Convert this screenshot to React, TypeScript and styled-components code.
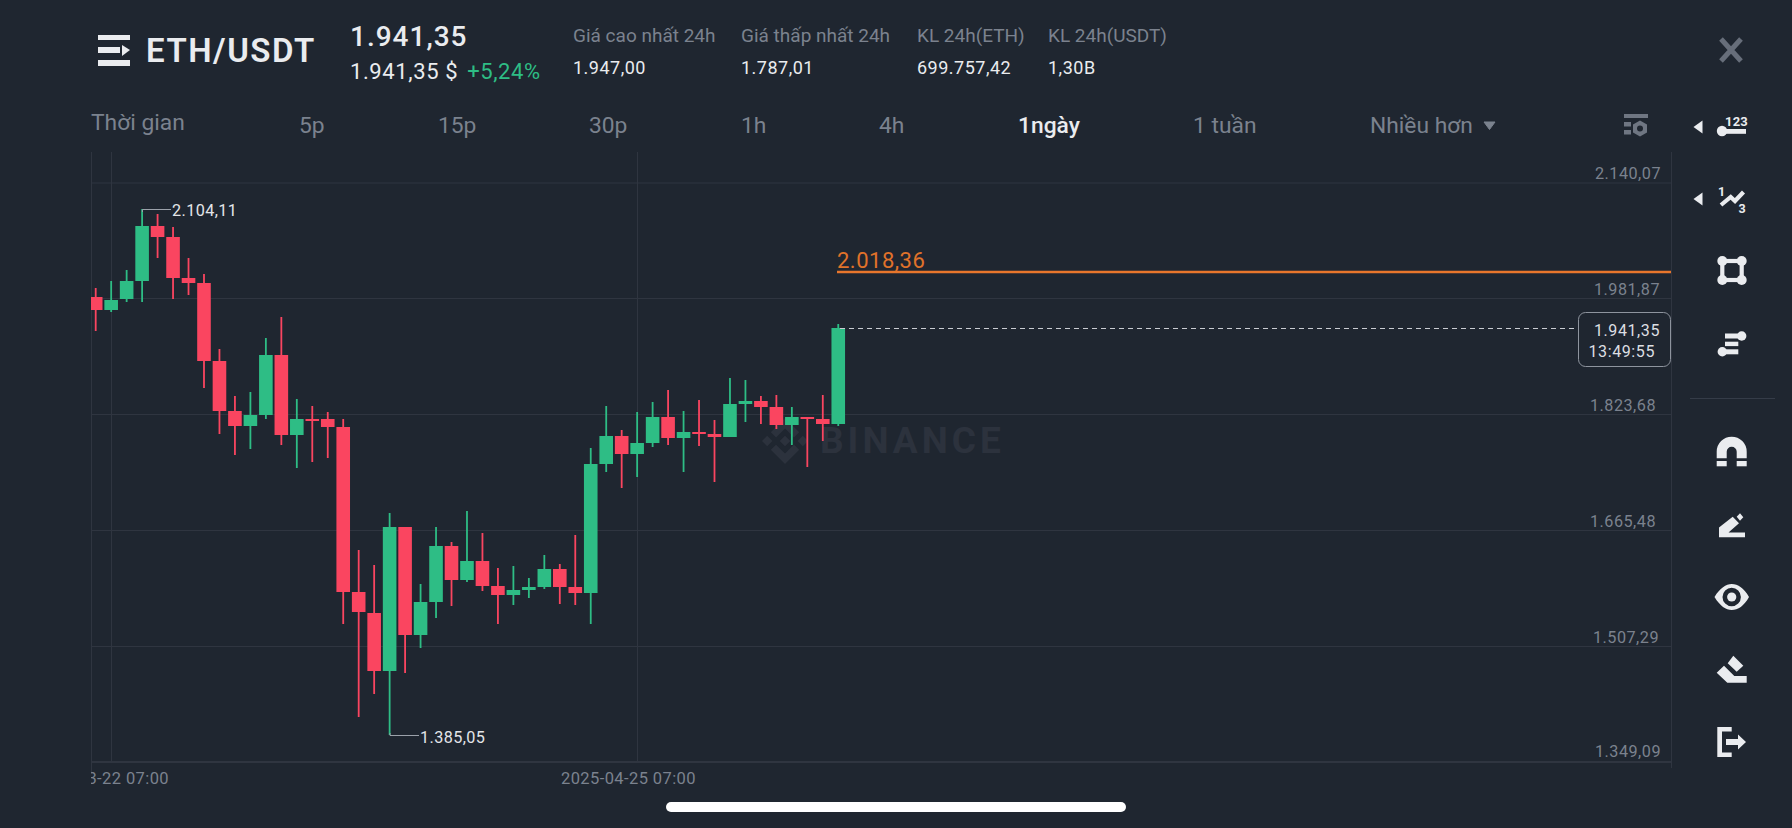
import styled, { createGlobalStyle } from 'styled-components';

const GlobalStyle = createGlobalStyle`
  html, body {
    margin: 0;
    padding: 0;
    background: #1f2630;
    font-family: Roboto, "Liberation Sans", sans-serif;
  }
`;

const Page = styled.div`
  width: 1792px;
  height: 828px;
  display: flex;
  flex-direction: column;
  overflow: hidden;
  background: #1f2630;
  color: #eaecef;
`;

const Header = styled.header`
  height: 91px;
  display: flex;
  align-items: flex-start;
  padding-left: 98px;
  padding-right: 47px;
  box-sizing: border-box;
`;

const PairGroup = styled.div`
  width: 252px;
  height: 100%;
  display: flex;
  align-items: center;
  gap: 16px;
  padding-top: 10px;
  box-sizing: border-box;
`;

const PairTitle = styled.h1`
  margin: 0;
  font-size: 33px;
  font-weight: 600;
  letter-spacing: 1.5px;
  line-height: 36px;
`;

const PriceBlock = styled.div`
  width: 223px;
  padding-top: 20px;
`;

const LastPrice = styled.div`
  font-size: 28px;
  font-weight: 500;
  letter-spacing: 1px;
  line-height: 34px;
`;

const SubPrice = styled.div`
  display: flex;
  gap: 9px;
  font-size: 22px;
  letter-spacing: 0.6px;
  line-height: 26px;
  margin-top: 5px;
`;

const Change = styled.span`
  color: #2ebd85;
`;

const Stat = styled.div<{ $w: number }>`
  width: ${(p) => p.$w}px;
  padding-top: 24px;
`;

const StatLabel = styled.div`
  font-size: 19px;
  color: #7b828e;
  line-height: 24px;
  white-space: nowrap;
`;

const StatValue = styled.div`
  font-size: 18px;
  line-height: 24px;
  margin-top: 8px;
  letter-spacing: 0.5px;
`;

const CloseButton = styled.button`
  margin-left: auto;
  margin-top: 36px;
  width: 28px;
  height: 28px;
  padding: 0;
  border: none;
  background: none;
  color: #676e7a;
`;

const Main = styled.main`
  flex: 1;
  display: flex;
  min-height: 0;
`;

const ChartColumn = styled.div`
  width: 1672px;
  display: flex;
  flex-direction: column;
`;

const Tabs = styled.nav`
  height: 59px;
  padding: 9px 0 0 91px;
  box-sizing: border-box;
  display: flex;
  align-items: center;
`;

const Tab = styled.div<{ $w: number; $active?: boolean; $raised?: boolean }>`
  width: ${(p) => p.$w}px;
  display: flex;
  align-items: center;
  gap: 10px;
  font-size: 22.8px;
  font-weight: ${(p) => (p.$active ? 500 : 400)};
  color: ${(p) => (p.$active ? '#eaecef' : '#7b828e')};
  margin-bottom: ${(p) => (p.$raised ? '6px' : '0')};
  white-space: nowrap;
`;

const Chart = styled.svg`
  display: block;
  flex: none;
`;

const Toolbar = styled.aside`
  flex: 1;
  display: flex;
  flex-direction: column;
  align-items: center;
`;

const ToolButton = styled.div`
  position: relative;
  width: 100%;
  height: 72px;
  flex: none;
  display: flex;
  align-items: center;
  justify-content: center;
  color: #eaecef;
`;

const ToolCaret = styled.svg`
  position: absolute;
  left: 21px;
  top: 29px;
`;

const Divider = styled.div`
  width: 85px;
  height: 1px;
  flex: none;
  margin: 19px 0 17px;
  background: #353c48;
`;

const HomeRow = styled.div`
  height: 36px;
  flex: none;
  display: flex;
  justify-content: center;
  padding-top: 10px;
  box-sizing: border-box;
`;

const HomeBar = styled.div`
  width: 460px;
  height: 10px;
  border-radius: 5px;
  background: #ffffff;
`;

// [up, high, bodyTop, bodyBottom, low] in page pixels
const candles: [boolean, number, number, number, number][] = [
  [false, 288, 297, 310, 331],
  [true, 281, 300, 310, 312],
  [true, 270, 281, 299, 302],
  [true, 209, 226, 281, 302],
  [false, 214, 226, 237, 258],
  [false, 227, 237, 278, 299],
  [false, 258, 278, 283, 295],
  [false, 274, 283, 361, 388],
  [false, 349, 361, 411, 434],
  [false, 396, 411, 426, 455],
  [true, 392, 415, 426, 449],
  [true, 338, 355, 415, 419],
  [false, 317, 355, 435, 445],
  [true, 399, 419, 435, 468],
  [false, 406, 419, 421, 462],
  [false, 412, 419, 427, 458],
  [false, 419, 427, 592, 624],
  [false, 550, 592, 612, 717],
  [false, 565, 613, 671, 694],
  [true, 513, 527, 671, 735],
  [false, 527, 527, 635, 673],
  [true, 584, 602, 635, 648],
  [true, 527, 546, 602, 618],
  [false, 542, 546, 580, 606],
  [true, 511, 561, 580, 582],
  [false, 533, 561, 586, 591],
  [false, 568, 586, 595, 624],
  [true, 566, 590, 595, 605],
  [true, 578, 587, 590, 598],
  [true, 555, 569, 587, 589],
  [false, 564, 569, 587, 604],
  [false, 535, 587, 593, 605],
  [true, 448, 464, 593, 624],
  [true, 406, 436, 464, 472],
  [false, 430, 436, 454, 488],
  [true, 412, 443, 454, 477],
  [true, 402, 417, 443, 447],
  [false, 390, 417, 438, 445],
  [true, 411, 432, 438, 472],
  [false, 400, 432, 434, 446],
  [false, 420, 434, 437, 482],
  [true, 378, 404, 437, 437],
  [true, 380, 401, 404, 422],
  [false, 396, 401, 407, 424],
  [false, 395, 407, 425, 429],
  [true, 407, 417, 425, 445],
  [false, 417, 417, 419, 467],
  [false, 395, 419, 424, 441],
  [true, 324, 328, 424, 426],
];

const gridRows = [183, 298.5, 414.5, 530.5, 646.5];

const axisLabels: [string, number, number][] = [
  ['2.140,07', 1661, 179],
  ['1.981,87', 1660, 295],
  ['1.823,68', 1656, 411],
  ['1.665,48', 1656, 527],
  ['1.507,29', 1659, 643],
  ['1.349,09', 1661, 757],
];

const GRID = '#2f3540';
const AXIS = '#7b828e';

function PriceChart() {
  return (
    <Chart width={1672} height={642} viewBox="0 150 1672 642">
      <defs>
        <clipPath id="plot">
          <rect x={91} y={150} width={1581} height={642} />
        </clipPath>
      </defs>

      {gridRows.map((y) => (
        <line key={y} x1={91} x2={1671} y1={y} y2={y} stroke={GRID} strokeWidth={1} />
      ))}
      <line x1={91} x2={1671} y1={762} y2={762} stroke={GRID} strokeWidth={2} />
      <line x1={91.5} x2={91.5} y1={152} y2={772} stroke={GRID} strokeWidth={1} />
      <line x1={111.5} x2={111.5} y1={152} y2={762} stroke={GRID} strokeWidth={1} />
      <line x1={637.5} x2={637.5} y1={152} y2={762} stroke={GRID} strokeWidth={1} />
      <line x1={1671.5} x2={1671.5} y1={152} y2={768} stroke={GRID} strokeWidth={1} />

      <g fill="#2c323d">
        <g transform="translate(761.7 417.7) scale(0.37)">
          <path d="M38.73 53.2 63 29l24.28 24.27 14.12-14.12L63 .75 24.6 39.07z" />
          <path d="M.75 63l14.12-14.12L29 63 14.87 77.12z" />
          <path d="M38.73 72.8 63 97l24.27-24.27 14.13 14.12L63 125.25 24.6 86.85z" />
          <path d="M97 63l14.12-14.12L125.25 63l-14.13 14.12z" />
          <path d="M77.32 63 63 48.66 48.68 63 63 77.32z" />
        </g>
        <text x={820} y={453} fontSize={37} fontWeight={700} letterSpacing={4}>
          BINANCE
        </text>
      </g>

      <g clipPath="url(#plot)">
        {candles.map(([up, high, top, bottom, low], i) => {
          const cx = 95.7 + 15.47 * i;
          const color = up ? '#2ebd85' : '#fa4560';
          return (
            <g key={i} fill={color}>
              <rect x={cx - 0.9} y={high} width={1.8} height={low - high} />
              <rect x={cx - 6.8} y={top} width={13.6} height={Math.max(bottom - top, 2)} />
            </g>
          );
        })}
      </g>

      {axisLabels.map(([label, x, y]) => (
        <text key={label} x={x} y={y} textAnchor="end" fontSize={16.2} letterSpacing={0.5} fill={AXIS}>
          {label}
        </text>
      ))}

      <path d="M142.5 212 V209.5 H171" fill="none" stroke="#9ba1aa" strokeWidth={1} />
      <text x={172} y={216} fontSize={16.2} letterSpacing={0.4} fill="#e3e5e9">
        2.104,11
      </text>
      <path d="M390 733 V735.5 H419" fill="none" stroke="#9ba1aa" strokeWidth={1} />
      <text x={420} y={743} fontSize={16.2} letterSpacing={0.4} fill="#e3e5e9">
        1.385,05
      </text>

      <line x1={837} x2={1671} y1={272} y2={272} stroke="#e8762c" strokeWidth={2.4} />
      <text x={837} y={268} fontSize={22} letterSpacing={0.5} fill="#e0722a">
        2.018,36
      </text>

      <line x1={840} x2={1578} y1={328.5} y2={328.5} stroke="#c9ccd2" strokeWidth={1} strokeDasharray="5 4" />
      <rect x={1578.5} y={312.5} width={92} height={54} rx={7} fill="#1f2630" stroke="#8e949e" strokeWidth={1} />
      <text x={1660} y={336} textAnchor="end" fontSize={16} letterSpacing={0.6} fill="#dcdfe3">
        1.941,35
      </text>
      <text x={1655} y={357} textAnchor="end" fontSize={16} letterSpacing={0.6} fill="#dcdfe3">
        13:49:55
      </text>

      <g clipPath="url(#plot)" fill={AXIS} fontSize={16.5} letterSpacing={0.4}>
        <text x={169} y={784} textAnchor="end">
          2025-03-22 07:00
        </text>
        <text x={561} y={784}>
          2025-04-25 07:00
        </text>
      </g>
    </Chart>
  );
}

function PairIcon() {
  return (
    <svg width={32} height={31} viewBox="0 0 32 31" fill="#eaecef">
      <rect x={0} y={0} width={32} height={5} />
      <rect x={0} y={12} width={22} height={6} />
      <path d="M24 10 L32 15 L24 21 Z" />
      <rect x={0} y={25} width={32} height={6} />
    </svg>
  );
}

function CloseIcon() {
  return (
    <svg width={28} height={28} viewBox="0 0 28 28">
      <path d="M4 3 L24 25 M24 3 L4 25" stroke="currentColor" strokeWidth={5} fill="none" />
    </svg>
  );
}

function LayoutIcon() {
  return (
    <svg width={24} height={23} viewBox="0 0 24 23" fill="#6f7682">
      <rect x={0} y={0} width={24} height={4} />
      <rect x={0} y={8} width={7} height={4.5} />
      <rect x={0} y={16} width={7} height={4.5} />
      <path
        fillRule="evenodd"
        d="M16 6.5 L23 10.5 V18.5 L16 22.5 L9 18.5 V10.5 Z M16 11.5 A3 3 0 1 0 16 17.5 A3 3 0 1 0 16 11.5 Z"
      />
    </svg>
  );
}

const ToolIcon = styled.svg.attrs({ width: 36, height: 36, viewBox: '0 0 36 36', fill: 'currentColor' })`
  display: block;
  overflow: visible;
`;

function Caret() {
  return (
    <ToolCaret width={10} height={14} viewBox="0 0 10 14" fill="#eaecef">
      <path d="M9.5 0.5 V13.5 L0.5 7 Z" />
    </ToolCaret>
  );
}

function Tools() {
  return (
    <Toolbar>
      <ToolButton>
        <Caret />
        <ToolIcon>
          <circle cx={8} cy={22} r={5.2} />
          <rect x={8} y={20} width={24} height={4.8} />
          <text x={11} y={16.8} fontSize={13} fontWeight={700} letterSpacing={0.2}>
            123
          </text>
        </ToolIcon>
      </ToolButton>
      <ToolButton>
        <Caret />
        <ToolIcon>
          <text x={4} y={14.5} fontSize={12.5} fontWeight={700}>
            1
          </text>
          <path d="M7 24 L16.7 16 L21 20 L29.5 11" fill="none" stroke="currentColor" strokeWidth={4.2} />
          <text x={24.5} y={32} fontSize={12.5} fontWeight={700}>
            3
          </text>
        </ToolIcon>
      </ToolButton>
      <ToolButton>
        <ToolIcon>
          <rect x={8.3} y={8} width={19.4} height={19} fill="none" stroke="currentColor" strokeWidth={4.2} />
          <circle cx={8.3} cy={8} r={5} />
          <circle cx={27.7} cy={8} r={5} />
          <circle cx={8.3} cy={27} r={5} />
          <circle cx={27.7} cy={27} r={5} />
        </ToolIcon>
      </ToolButton>
      <ToolButton>
        <ToolIcon>
          <circle cx={27.7} cy={11} r={4.7} />
          <rect x={11} y={8.5} width={16.7} height={5} />
          <rect x={11} y={16.7} width={13.3} height={4.4} />
          <rect x={8.3} y={24.3} width={16} height={5} />
          <circle cx={8.3} cy={26.8} r={4.7} />
        </ToolIcon>
      </ToolButton>
      <Divider />
      <ToolButton>
        <ToolIcon>
          <path d="M2.7 24.3 V17.7 A15 15 0 0 1 32.7 17.7 V24.3 H22.7 V17.7 A5 5 0 0 0 12.7 17.7 V24.3 Z" />
          <rect x={2.7} y={27} width={10} height={5.3} />
          <rect x={22.7} y={27} width={10} height={5.3} />
        </ToolIcon>
      </ToolButton>
      <ToolButton>
        <ToolIcon>
          <path d="M5 31.3 V21.5 L18.7 10.7 L25 17.3 L14.5 26.5 H31 V31.3 Z" />
          <path d="M22.7 10.7 L26 7.3 L29.3 11.3 L26 14.7 Z" />
        </ToolIcon>
      </ToolButton>
      <ToolButton>
        <ToolIcon>
          <path
            fillRule="evenodd"
            d="M0.5 19 C6 10 12 6 17.7 6 C24 6 30 10 35 19 C30 28 24 32 17.7 32 C12 32 6 28 0.5 19 Z M17.7 9.8 A9.2 9.2 0 1 0 17.7 28.2 A9.2 9.2 0 1 0 17.7 9.8 Z"
          />
          <circle cx={17.7} cy={19} r={4.6} />
        </ToolIcon>
      </ToolButton>
      <ToolButton>
        <ToolIcon>
          <path d="M19.3 5.7 L29.3 15.7 L22.7 21.7 L13.7 13.3 Z" />
          <path d="M2.7 22.7 L10 15.7 L20.3 26 H32.7 V32.7 H13.3 Z" />
        </ToolIcon>
      </ToolButton>
      <ToolButton>
        <ToolIcon>
          <path d="M3.3 5 H17.7 V9.5 H8 V30.5 H17.7 V35 H3.3 Z" />
          <path d="M12 17 H24 V12.5 L32 20 L24 27.5 V23 H12 Z" />
        </ToolIcon>
      </ToolButton>
    </Toolbar>
  );
}

const DownCaret = styled.svg`
  flex: none;
`;

export default function App() {
  return (
    <Page>
      <GlobalStyle />
      <Header>
        <PairGroup>
          <PairIcon />
          <PairTitle>ETH/USDT</PairTitle>
        </PairGroup>
        <PriceBlock>
          <LastPrice>1.941,35</LastPrice>
          <SubPrice>
            <span>1.941,35 $</span>
            <Change>+5,24%</Change>
          </SubPrice>
        </PriceBlock>
        <Stat $w={168}>
          <StatLabel>Giá cao nhất 24h</StatLabel>
          <StatValue>1.947,00</StatValue>
        </Stat>
        <Stat $w={176}>
          <StatLabel>Giá thấp nhất 24h</StatLabel>
          <StatValue>1.787,01</StatValue>
        </Stat>
        <Stat $w={131}>
          <StatLabel>KL 24h(ETH)</StatLabel>
          <StatValue>699.757,42</StatValue>
        </Stat>
        <Stat $w={131}>
          <StatLabel>KL 24h(USDT)</StatLabel>
          <StatValue>1,30B</StatValue>
        </Stat>
        <CloseButton aria-label="Đóng">
          <CloseIcon />
        </CloseButton>
      </Header>
      <Main>
        <ChartColumn>
          <Tabs>
            <Tab $w={208} $raised>Thời gian</Tab>
            <Tab $w={139}>5p</Tab>
            <Tab $w={151}>15p</Tab>
            <Tab $w={152}>30p</Tab>
            <Tab $w={138}>1h</Tab>
            <Tab $w={139}>4h</Tab>
            <Tab $w={175} $active>1ngày</Tab>
            <Tab $w={177}>1 tuần</Tab>
            <Tab $w={254}>
              Nhiều hơn
              <DownCaret width={13} height={9} viewBox="0 0 13 9" fill="#7b828e">
                <path d="M1 1 H12 L6.5 8.5 Z" stroke="#7b828e" strokeLinejoin="round" />
              </DownCaret>
            </Tab>
            <LayoutIcon />
          </Tabs>
          <PriceChart />
        </ChartColumn>
        <Tools />
      </Main>
      <HomeRow>
        <HomeBar />
      </HomeRow>
    </Page>
  );
}
